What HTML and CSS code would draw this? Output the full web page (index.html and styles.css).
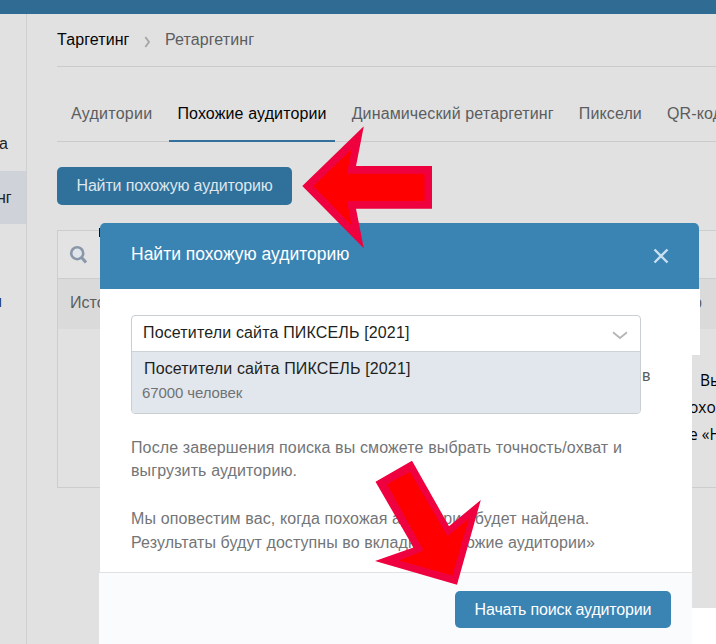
FILE: index.html
```
<!DOCTYPE html>
<html lang="ru">
<head>
<meta charset="utf-8">
<title>Ретаргетинг</title>
<link rel="stylesheet" href="styles.css">
</head>
<body>
<div class="page">
  <header class="topbar"></header>
  <div class="layout">
    <nav class="sidebar">
      <div class="side-item side-first">а</div>
      <div class="side-item side-active">нг</div>
      <div class="side-item side-link">и</div>
    </nav>
    <main class="main">
      <div class="crumbs">
        <span class="crumb-root">Таргетинг</span>
        <svg class="crumb-arrow" width="7" height="12" viewBox="0 0 7 12"><path d="M1.3 1 5 6 1.3 11" fill="none" stroke="#a3a5a8" stroke-width="1.8"/></svg>
        <span>Ретаргетинг</span>
      </div>
      <div class="tabs">
        <span class="tab">Аудитории</span>
        <span class="tab tab-active">Похожие аудитории</span>
        <span class="tab">Динамический ретаргетинг</span>
        <span class="tab">Пиксели</span>
        <span class="tab">QR-код</span>
      </div>
      <button class="btn btn-find">Найти похожую аудиторию</button>
      <section class="table">
        <div class="search">
          <svg width="20" height="20" viewBox="0 0 20 20"><circle cx="8.2" cy="8.2" r="6" fill="#dfe5eb" stroke="#8997a8" stroke-width="2.6"/><path d="M12.6 12.6 17 17.5" stroke="#8997a8" stroke-width="3"/></svg>
        </div>
        <div class="thead"><span>Исто</span><span class="th-last">о</span></div>
        <div class="tbody">
          <p class="hint"><span class="hint-first">Вы</span><br>охож<br><span class="hint-third">е «На</span></p>
        </div>
      </section>
    </main>
  </div>
  <div class="page-end"></div>

  <div class="mark"></div>
  <div class="modal">
    <div class="modal-head">
      <h2>Найти похожую аудиторию</h2>
      <svg width="16" height="16" viewBox="0 0 16 16"><path d="M1.5 1.5 14.5 14.5M14.5 1.5 1.5 14.5" stroke="#c9e0f1" stroke-width="2.4"/></svg>
    </div>
    <div class="modal-top"></div>
    <div class="modal-body">
      <div class="row">
        <div class="select">
          <div class="select-value"><span>Посетители сайта ПИКСЕЛЬ [2021]</span>
            <svg width="16" height="9" viewBox="0 0 16 9"><path d="M1 1.3 8 7 15 1.3" fill="none" stroke="#b4b6b9" stroke-width="1.8"/></svg>
          </div>
          <div class="option">
            <div class="option-name">Посетители сайта ПИКСЕЛЬ [2021]</div>
            <div class="option-count">67000 человек</div>
          </div>
        </div>
        <span class="row-tail">в</span>
      </div>
      <p class="note note-a">После завершения поиска вы сможете выбрать точность/охват и<br>выгрузить аудиторию.</p>
      <p class="note note-b">Мы оповестим вас, когда похожая аудитория будет найдена.<br><span class="note-last">Результаты будут доступны во вкладке «Похожие аудитории»</span></p>
    </div>
    <div class="modal-foot"><button class="btn btn-start">Начать поиск аудитории</button></div>
  </div>

  <svg class="arrows" width="716" height="644" viewBox="0 0 716 644">
    <path fill="#ef003f" d="M302.3 186 363.8 126.3 356 166H432V208.7H356L363.8 248.3Z"/>
    <path fill="#f00" d="M313.5 186 351.5 149.5 347 173.7H424.5V201H347L351.5 225Z"/>
    <path fill="#ef003f" d="M412 460.7 375.5 481.7 413.5 547.5 375 561 457 584.7 480.8 500 449 526.2Z"/>
    <path fill="#f00" d="M410 471.7 387 484.3 423.5 550.5 399 560.5 452.3 575.5 469 518.5 447.5 536Z"/>
  </svg>
</div>
</body>
</html>
```
FILE: styles.css
```
* { box-sizing: border-box; }
body { margin: 0; font-family: "Liberation Sans", Arial, sans-serif; font-size: 16px; color: #5b5d5f; }
h2, p { margin: 0; font-weight: normal; }
svg { display: block; flex: none; }
.page { position: relative; width: 716px; height: 644px; overflow: hidden; background: #e1e1e1; }
.topbar { height: 14px; background: #2f6b93; }
.layout { display: flex; height: 630px; }
.sidebar { width: 27px; flex: none; border-right: 1px solid #cdcfd0; overflow: hidden; color: #222; }
.side-item { height: 54px; line-height: 56px; white-space: nowrap; }
.side-first { margin-top: 102px; text-indent: -1px; }
.side-active { background: #cfd2d8; text-indent: -3px; margin-top: 1px; height: 53px; line-height: 54px; }
.side-link { margin-top: 51px; text-indent: -7px; color: #1f2d55; line-height: 54px; }
.main { width: 689px; flex: none; padding-left: 30px; overflow: hidden; }
.crumbs { display: flex; align-items: center; height: 53px; padding-bottom: 1px; border-bottom: 1px solid #cbcbcb; letter-spacing: 0.1px; }
.crumb-root { color: #050505; width: 72px; }
.crumb-arrow { margin: 5px 14px 0 15px; }
.tabs { display: flex; gap: 9px; height: 75px; padding: 19px 0 0 6px; border-bottom: 1px solid #cbcbcb; white-space: nowrap; letter-spacing: 0.13px; }
.tab { padding: 0 8px; line-height: 56px; height: 56px; }
.tab:first-child { letter-spacing: 0.26px; }
.tab-active { color: #050505; border-bottom: 2px solid #34709c; }
.btn { display: block; border: 0; border-radius: 5px; font: inherit; white-space: nowrap; padding: 0; color: #fff; letter-spacing: -0.16px; }
.btn-find { margin-top: 25px; width: 235px; height: 38px; background: #30719b; color: #dce6ee; }
.table { margin-top: 25px; width: 670px; height: 258px; border: 1px solid #cbcdce; }
.search { height: 48px; padding: 14px 11px; border-bottom: 1px solid #cbcdce; background: #e3e3e3; }
.thead { display: flex; justify-content: space-between; height: 50px; line-height: 47px; padding: 0 24px 0 12px; background: #dadada; }
.th-last { width: 9px; }
.tbody { display: flex; justify-content: flex-end; padding-top: 38px; }
.hint { width: 37px; font-family: "Open Sans", "Noto Sans", sans-serif; line-height: 27px; color: #000; white-space: nowrap; font-size: 15.5px; }
.hint-first { margin-left: 11px; }
.page-end { position: absolute; left: 692px; top: 608px; width: 24px; height: 36px; background: #fff; }
.mark { position: absolute; left: 99px; top: 228px; width: 6px; height: 9px; background: #111; }
.modal { position: absolute; left: 100px; top: 222px; width: 600px; height: 422px; }
.modal-head { display: flex; align-items: center; justify-content: space-between; height: 66px; margin: 1px 1px 0 0; padding: 0 30px 0 31px; border-radius: 5px 5px 0 0; background: #3a84b4; }
.modal-head h2 { margin-top: -3px; font-size: 17.5px; color: #fff; }
.modal-top { height: 66px; background: #fff; }
.modal-body { width: 592px; height: 283px; margin-top: -66px; padding: 26px 0 0 31px; background: #fff; white-space: nowrap; }
.row { display: flex; align-items: flex-start; height: 99px; }
.select { width: 510px; height: 99px; border: 1px solid #c9ced2; border-radius: 4px; overflow: hidden; color: #1d1f21; }
.select-value { display: flex; align-items: center; justify-content: space-between; height: 36px; padding: 0 12px 2px 11px; border-bottom: 1px solid #ccd2d7; letter-spacing: 0.15px; }
.select-value svg { margin-top: 5px; }
.option { height: 61px; padding: 7px 0 0 12px; background: #e2e7ed; letter-spacing: 0.15px; }
.option-name { line-height: 20px; }
.option-count { margin-left: -2px; line-height: 28px; font-size: 15px; letter-spacing: -0.1px; color: #707274; }
.row-tail { padding: 52px 0 0 1px; line-height: 18px; }
.note { color: #737577; letter-spacing: 0.12px; }
.note-last { letter-spacing: 0.08px; }
.note-a { margin-top: 22px; line-height: 23px; }
.note-b { margin-top: 25px; line-height: 24px; }
.modal-foot { width: 593px; height: 72px; margin-left: -1px; padding: 18px 0 0 356px; border-top: 1px solid #dfe2e4; background: #fafbfd; }
.btn-start { width: 216px; height: 37px; background: #3a84b4; }
.arrows { position: absolute; left: 0; top: 0; }
```
